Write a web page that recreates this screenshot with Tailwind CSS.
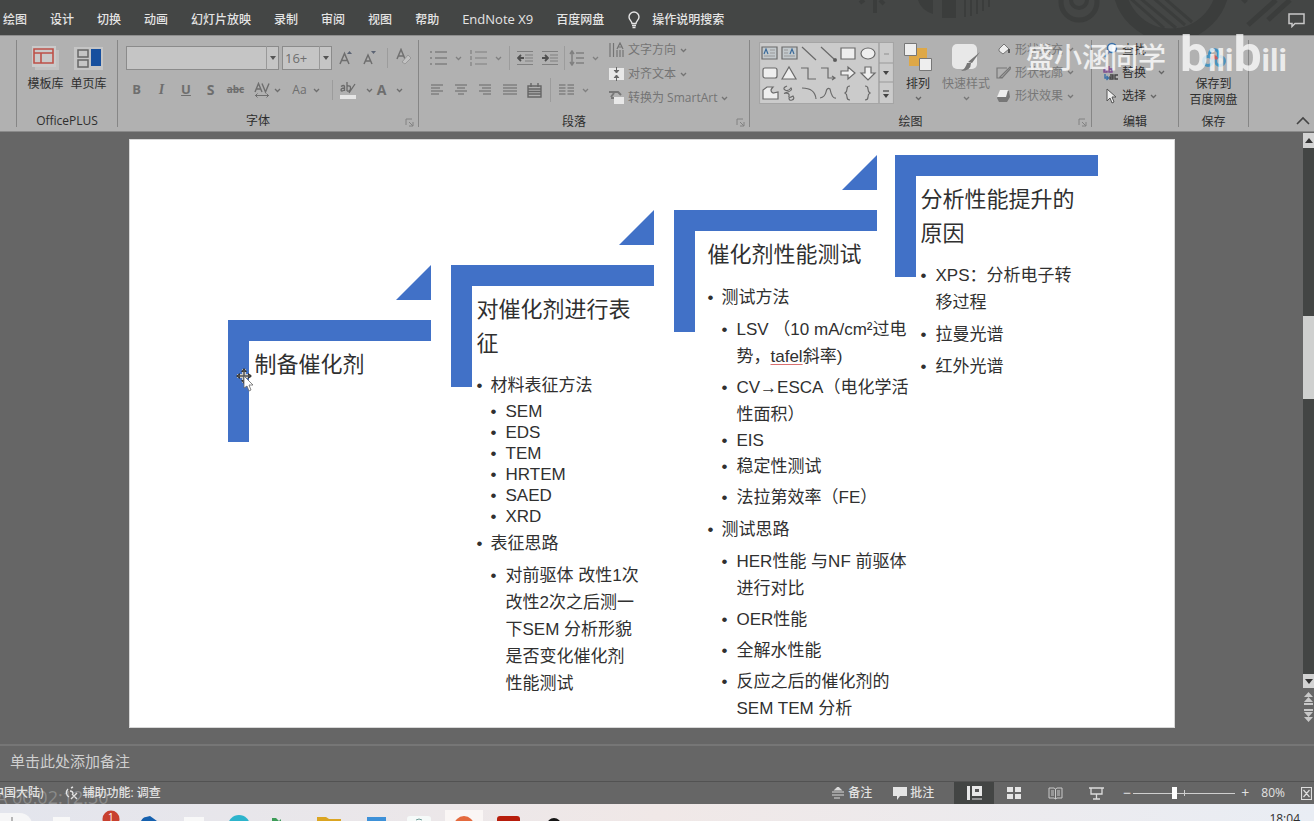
<!DOCTYPE html>
<html lang="zh-CN">
<head>
<meta charset="utf-8">
<title>演示文稿</title>
<script src="https://cdn.jsdelivr.net/npm/@tailwindcss/browser@4"></script>
</head>
<body class="flex h-screen flex-col overflow-hidden bg-[#666666] font-['Open_Sans','Noto_Sans_CJK_SC',sans-serif] text-xs text-[#2e2e2e]">
<svg class="hidden">
  <symbol id="caret" viewBox="0 0 7 5"><path d="M1 1l2.500 2.500L6 1" fill="none" stroke="currentColor" stroke-width="1.300"/></symbol>
  <symbol id="launch" viewBox="0 0 9 9"><path d="M1 7V1h6M4 4l4 4M8 4v4H4" fill="none" stroke="#828282"/></symbol>
</svg>

<!-- Tab bar -->
<header class="relative flex h-[35px] shrink-0 items-center bg-[#444645] pt-[5px]">
  <svg class="absolute top-0 right-0 h-[35px] w-[464px]" viewBox="0 0 464 35" fill="none" stroke="#3b3d3c">
    <path d="M10 3l4-3M25 0v13M34 4l-4-4" stroke-width="4"/>
    <path d="M68 0h15v14q-12-4-15-14zM92 0h14v18H92z" fill="#3b3d3c" stroke="none"/>
    <path d="M115 0v17M121 0v16M127 0v14M133 0v11M139 0v7" stroke-width="2"/>
    <circle cx="229" cy="2" r="18" stroke-width="5"/><circle cx="229" cy="0" r="8" stroke-width="4"/>
    <circle cx="321" cy="-17" r="52" stroke-width="13"/>
    <path d="M280-2l34 30M290-2l36 30M301-4l34 29M312-4l30 26" stroke-width="3"/>
    <path d="M398 25l28-25M418 20l22-20M393 2l3-3" stroke-width="5"/>
  </svg>
  <nav class="relative flex items-center gap-[23px] pl-[3px] font-medium whitespace-nowrap text-[#e4e4e4]">
    <button>绘图</button><button>设计</button><button>切换</button><button>动画</button><button>幻灯片放映</button><button>录制</button><button>审阅</button><button>视图</button><button>帮助</button><button class="text-[13px]">EndNote X9</button><button>百度网盘</button>
    <button class="flex items-center gap-[11px]"><svg class="h-[18px] w-[14px]" viewBox="0 0 14 18" fill="none" stroke="#e4e4e4" stroke-width="1.400"><path d="M5 12.500C5 10 2 9 2 6a5 5 0 0 1 10 0c0 3-3 4-3 6.500zM5 14.500h4M5.500 16.500h3"/></svg><span>操作说明搜索</span></button>
  </nav>
  <button class="relative mr-[9px] ml-auto" aria-label="批注"><svg class="h-[15px] w-[17px]" viewBox="0 0 17 15" fill="none" stroke="#c8c8c8" stroke-width="1.500"><path d="M1 1h15v9.500H7L4 13.500v-3H1z"/></svg></button>
</header>

<!-- Ribbon -->
<section class="relative flex h-[97px] shrink-0 border-y border-t-[#8e8e8e] border-b-[#8a8a8a] bg-[#b1b1b1] py-1 whitespace-nowrap">
  <div class="w-4 shrink-0"></div>
  <div class="flex w-[101px] shrink-0 flex-col border-l border-[#868686]">
    <div class="flex h-[68px] justify-center gap-[3px] pt-[6px]">
      <button class="flex w-10 flex-col items-center"><svg class="h-[26px] w-[30px]" viewBox="0 0 30 26"><path d="M4 4h24v20H4z" fill="#c2c2c2"/><path d="M1 0h24v21H1z" fill="#cacaca"/><path d="M3 3h19v14H3zM3 7h19M10 7v10" fill="none" stroke="#bd5048" stroke-width="1.600"/></svg><span class="pt-1">模板库</span></button>
      <button class="flex w-10 flex-col items-center"><svg class="h-[26px] w-[30px]" viewBox="0 0 30 26"><path d="M0 1h29v23H0z" fill="#c5c5c5"/><path d="M4 4h10v7H4zM4 14h10v7H4z" fill="none" stroke="#666" stroke-width="1.500"/><path d="M17 3h10v17H17z" fill="#164f9e"/></svg><span class="pt-1">单页库</span></button>
    </div>
    <div class="h-5 text-center leading-[28px]">OfficePLUS</div>
  </div>

  <div class="relative flex w-[301px] shrink-0 flex-col border-l border-[#868686] text-[#6e6e6e]">
    <div class="flex h-[68px] flex-col gap-1 pt-[6px]">
      <div class="flex items-center gap-[3px] pl-2">
        <div class="relative h-6 w-[153px]"><input aria-label="字体" class="block h-6 w-full border border-[#8b8b8b] bg-[#c5c5c5]"><span class="absolute top-0 right-0 flex h-6 w-[13px] items-center justify-center border-l border-[#999]"><svg class="h-1 w-[6px]" viewBox="0 0 6 4"><path d="M0 0h6L3 4z" fill="#555"/></svg></span></div>
        <div class="relative h-6 w-[50px]"><input aria-label="字号" value="16+" class="block h-6 w-full border border-[#8b8b8b] bg-[#c5c5c5] pl-0.5 text-[13px]"><span class="absolute top-0 right-0 flex h-6 w-[13px] items-center justify-center border-l border-[#999]"><svg class="h-1 w-[6px]" viewBox="0 0 6 4"><path d="M0 0h6L3 4z" fill="#555"/></svg></span></div>
        <button class="ml-1 w-[21px]" aria-label="增大字号"><svg class="h-4 w-[14px]" viewBox="0 0 14 16"><path d="M1 14L5.500 3.500 10 14M3 10.500h5" fill="none" stroke="#6e6e6e" stroke-width="1.500"/><path d="M8 4l2.500-3L13 4z" fill="#5c6474"/></svg></button>
        <button class="w-[21px]" aria-label="减小字号"><svg class="h-4 w-[14px]" viewBox="0 0 14 16"><path d="M1 14L5 5l4 9M2.500 11h5" fill="none" stroke="#6e6e6e" stroke-width="1.500"/><path d="M8 1l2.500 3L13 1z" fill="#5c6474"/></svg></button>
        <span class="h-5 w-px bg-[#9c9c9c]"></span>
        <button class="ml-1 w-5" aria-label="清除格式"><svg class="h-5 w-5" viewBox="0 0 20 20"><path d="M2 11L6 1.500 10 11M3.500 8h5" fill="none" stroke="#707070" stroke-width="1.500"/><path d="M7 14l6-7 3 3-6 6z" fill="#c2c2c2" stroke="#999"/></svg></button>
      </div>
      <div class="flex h-8 items-center pl-[6px]">
        <button class="w-[25px] text-[13px] font-bold">B</button><button class="w-[25px] font-['Liberation_Serif'] text-sm font-bold italic">I</button><button class="w-[24px] text-[13px] font-bold underline">U</button><button class="w-[25px] text-sm font-bold">S</button><button class="w-[25px] text-[10px] font-bold line-through">abc</button>
        <button class="flex w-[38px] items-center justify-center gap-1" aria-label="字符间距"><svg class="h-4 w-4" viewBox="0 0 16 16" fill="none" stroke="#6e6e6e" stroke-width="1.400"><path d="M1 10L4.500 1.500 8 10M2 7h5M8 1.500L11.500 10 15 1.500"/><path d="M1 13.500h14M3.500 11.500l-2 2 2 2M12.500 11.500l2 2-2 2" stroke-width="1"/></svg><svg class="h-[5px] w-[7px]"><use href="#caret"/></svg></button>
        <button class="flex w-[40px] items-center justify-center gap-[6px]"><span>Aa</span><svg class="h-[5px] w-[7px]"><use href="#caret"/></svg></button>
        <span class="mx-[6px] h-5 w-px bg-[#9c9c9c]"></span>
        <button class="flex w-[34px] items-center gap-[9px]" aria-label="突出显示"><svg class="h-5 w-[18px]" viewBox="0 0 18 20"><path d="M1 15h16v4H1z" fill="#e6e6e6"/><path d="M2 6.500q3-2 3.500 0V11M5.500 8Q2 8 2 10t3.500 0M8 2v9M8 6q4-1 3.500 2.500T8 11M16 4l-6 9" fill="none" stroke="#6a6a6a" stroke-width="1.300"/></svg><svg class="h-[5px] w-[7px]"><use href="#caret"/></svg></button>
        <button class="flex w-[34px] items-center justify-center gap-[10px] text-sm font-bold">A<svg class="h-[5px] w-[7px]"><use href="#caret"/></svg></button>
      </div>
    </div>
    <div class="h-5 pr-5 text-center leading-[28px] text-[#2e2e2e]">字体</div>
    <svg class="absolute right-1 bottom-0 h-[9px] w-[9px]"><use href="#launch"/></svg>
  </div>

  <div class="relative flex w-[331px] shrink-0 flex-col border-l border-[#868686] text-[#808080]">
    <div class="flex h-[68px]">
      <div class="flex w-[190px] flex-col gap-1 pt-[6px] pl-[11px]">
        <div class="flex h-6 items-center">
          <button class="flex w-10 items-center gap-2" aria-label="项目符号"><svg class="h-4 w-[17px]" viewBox="0 0 17 16" stroke="currentColor" stroke-width="1.300"><path d="M0 2h2M5 2h12M0 8h2M5 8h12M0 14h2M5 14h12"/></svg><svg class="h-[5px] w-[7px]"><use href="#caret"/></svg></button>
          <button class="flex w-[39px] items-center gap-2" aria-label="编号"><svg class="h-4 w-[17px]" viewBox="0 0 17 16" fill="none" stroke="currentColor" stroke-width="1.200"><path d="M1 0v4M1 6v4M1 12v4M5 2h12M5 8h12M5 14h12"/></svg><svg class="h-[5px] w-[7px]"><use href="#caret"/></svg></button>
          <span class="h-6 w-px bg-[#9c9c9c]"></span>
          <button class="flex w-[25px] justify-center pl-1" aria-label="减少缩进"><svg class="h-4 w-4" viewBox="0 0 16 16"><path d="M0 1.500h16M8 5h8M8 8h8M8 11h8M0 14.500h16" stroke="currentColor" stroke-width="1.200"/><path d="M7 8H2M4 5L1 8l3 3" fill="none" stroke="#505050" stroke-width="1.800"/></svg></button>
          <button class="flex w-[25px] justify-center pl-1" aria-label="增加缩进"><svg class="h-4 w-4" viewBox="0 0 16 16"><path d="M0 1.500h16M8 5h8M8 8h8M8 11h8M0 14.500h16" stroke="currentColor" stroke-width="1.200"/><path d="M0 8h5M3 5l3 3-3 3" fill="none" stroke="#505050" stroke-width="1.800"/></svg></button>
          <span class="mx-[4px] h-6 w-px bg-[#9c9c9c]"></span>
          <button class="flex items-center gap-2" aria-label="行距"><svg class="h-4 w-[15px]" viewBox="0 0 15 16" fill="none" stroke="currentColor" stroke-width="1.500"><path d="M3 2v12M1 4l2-3 2 3M1 12l2 3 2-3M7 3h8M7 8h8M7 13h8"/></svg><svg class="h-[5px] w-[7px]"><use href="#caret"/></svg></button>
        </div>
        <div class="flex h-8 items-center gap-[10px]">
          <button aria-label="左对齐"><svg class="h-3 w-[14px]" viewBox="0 0 14 12" stroke="currentColor" stroke-width="1.300"><path d="M1 1h12M1 4h9M1 7h12M1 10h8"/></svg></button>
          <button aria-label="居中"><svg class="h-3 w-[14px]" viewBox="0 0 14 12" stroke="currentColor" stroke-width="1.300"><path d="M1 1h12M3 4h8M1 7h12M4 10h6"/></svg></button>
          <button aria-label="右对齐"><svg class="h-3 w-[14px]" viewBox="0 0 14 12" stroke="currentColor" stroke-width="1.300"><path d="M1 1h12M4 4h9M1 7h12M5 10h8"/></svg></button>
          <button aria-label="两端对齐"><svg class="h-3 w-[15px]" viewBox="0 0 15 12" stroke="currentColor" stroke-width="1.300"><path d="M1 1h14M1 4h14M1 7h14M1 10h14"/></svg></button>
          <button aria-label="分散对齐"><svg class="h-[15px] w-[15px]" viewBox="0 0 15 15" fill="none" stroke="#666" stroke-width="1.400"><path d="M1 3h13v11H1zM1 6h13M1 8.500h13M1 11h13M4 0v4M11 0v4"/></svg></button>
          <span class="-mx-[2px] h-6 w-px bg-[#9c9c9c]"></span>
          <button class="flex items-center gap-2" aria-label="分栏"><svg class="h-3 w-[15px]" viewBox="0 0 15 12" stroke="currentColor" stroke-width="1.300"><path d="M0 1h6.500M8.500 1H15M0 4h6.500M8.500 4H15M0 7h6.500M8.500 7H15M0 10h6.500M8.500 10H15"/></svg><svg class="h-[5px] w-[7px]"><use href="#caret"/></svg></button>
        </div>
      </div>
      <div class="-mt-[2px] flex flex-col leading-6 text-[#747474]">
        <button class="flex h-6 items-center gap-1"><svg class="h-4 w-[15px]" viewBox="0 0 15 16" fill="none" stroke="currentColor" stroke-width="1.200"><path d="M1 1v14M4.500 1v14M8 8v7M14 8v7M8 7l3-6 3 6M9 5h4M11 8v7"/></svg><span>文字方向</span><svg class="h-[5px] w-[7px]"><use href="#caret"/></svg></button>
        <button class="flex h-6 items-center gap-1"><svg class="h-4 w-[15px]" viewBox="0 0 15 16"><path d="M0 2h15v12H0z" fill="#e8e8e8"/><path d="M7.500 1v5M7.500 10v5M5 4l2.500 3L10 4M5 12l2.500-3 2.500 3" stroke="#666" fill="#666"/></svg><span>对齐文本</span><svg class="h-[5px] w-[7px]"><use href="#caret"/></svg></button>
        <button class="flex h-6 items-center gap-1"><svg class="h-4 w-[15px]" viewBox="0 0 15 16"><path d="M0 2h9l3 3M2 7l3-4M2 8h3" stroke="#777" stroke-width="2" fill="none"/><path d="M5 7h10v7H5z" fill="#e8e8e8"/></svg><span>转换为 SmartArt</span><svg class="h-[5px] w-[7px]"><use href="#caret"/></svg></button>
      </div>
    </div>
    <div class="h-5 pr-5 text-center leading-[28px] text-[#2e2e2e]">段落</div>
    <svg class="absolute right-1 bottom-0 h-[9px] w-[9px]"><use href="#launch"/></svg>
  </div>

  <div class="relative flex w-[342px] shrink-0 flex-col border-l border-[#868686] text-[#777777]">
    <div class="flex h-[68px]">
      <svg class="mt-[2px] ml-[9px] h-[62px] w-[135px]" viewBox="0 0 135 62" fill="none" stroke="#6a6a6a" stroke-width="1.200">
        <path d="M.5.500h134v61H.5z" fill="#cbcbcb" stroke="#a5a5a5"/><path d="M120 1v60M120 21h14M120 40h14" stroke="#999"/>
        <path d="M3 5h15v12H3zM23 5h15v12H23z" fill="#c3c9cc"/><path d="M5 12l2-5 2 5M31 12l2-5 2 5" stroke="#3a6a9a"/><path d="M11 8h5M11 11h5M5 14h11M25 8h4M25 11h4M25 14h11" stroke="#999"/>
        <path d="M43 5l14 13M62 5l13 12"/><circle cx="76" cy="18" r="1.500" fill="#555"/>
        <path d="M82 6h14v11H82z" fill="#eee"/><ellipse cx="109" cy="11.500" rx="7" ry="5.500" fill="#eee"/>
        <rect x="4" y="26" width="14" height="10" rx="2" fill="#eee"/><path d="M23 37l7-12 7 12z" fill="#eee"/><path d="M42 26h7v11h8M62 26h7v10h6M73 34l3 2-3 2"/>
        <path d="M82 29h7v-4l7 6-7 6v-4h-7zM106 25h6v6h4l-7 7-7-7h4z" fill="#eee"/>
        <path d="M4 57V48l4-3h6q-4 4 0 6l5-1v7z" fill="#eee"/><path d="M28 44q-5 2-2 4t6-2q2 2-3 4t-3 1q5 0 4 3t4 0q2 3-1 4t-3-2M43 46q13 0 14 11M61 56q5-1 6-6t4-3q2 10 6 9M91 44q-3 0-3 3t-2 4q2 1 2 4t3 3M106 44q3 0 3 3t2 4q-2 1-2 4t-3 3"/>
        <path d="M125 12h5" stroke="#999"/><path d="M124 29h6l-3 4zM124 52h6l-3 4z" fill="#444" stroke="none"/><path d="M124 49h6" stroke="#444"/>
      </svg>
      <button class="flex w-12 flex-col items-center pt-[3px] text-[#2e2e2e]"><svg class="h-[29px] w-[28px]" viewBox="0 0 28 29"><path d="M12 5h11v10H12zM5 13h10v10H5z" fill="#dea847"/><path d="M.5.500h12v12H.5zM15.500 15.500h12v12h-12z" fill="#eee" stroke="#777"/></svg><span class="pt-1">排列</span><svg class="mt-1 h-[5px] w-[7px] text-[#666]"><use href="#caret"/></svg></button>
      <button class="flex w-12 flex-col items-center pt-[3px]"><svg class="h-[29px] w-[28px]" viewBox="0 0 28 29"><rect y="1" width="25" height="25" rx="5" fill="#e8e8e8"/><path d="M28 9l-8 11-4-1zM19 20q0 8-10 8 5-3 6-8z" fill="#777"/></svg><span class="pt-1">快速样式</span><svg class="mt-1 h-[5px] w-[7px]"><use href="#caret"/></svg></button>
      <div class="-mt-[2px] ml-[6px] flex flex-col">
        <button class="flex h-6 items-center gap-1"><svg class="h-4 w-[15px]" viewBox="0 0 15 16"><path d="M3 7l5-5 5 5-6 5-4-3z" fill="#eee" stroke="#777"/><path d="M13 7v4" stroke="#555" stroke-width="2"/></svg><span>形状填充</span><svg class="h-[5px] w-[7px]"><use href="#caret"/></svg></button>
        <button class="flex h-6 items-center gap-1"><svg class="h-4 w-[15px]" viewBox="0 0 15 16" fill="none" stroke="#777" stroke-width="1.200"><path d="M11 3H1v10h4M4 12L14 2l1 1L6 13z"/></svg><span>形状轮廓</span><svg class="h-[5px] w-[7px]"><use href="#caret"/></svg></button>
        <button class="flex h-6 items-center gap-1"><svg class="h-4 w-[15px]" viewBox="0 0 15 16"><path d="M4 3h9l1 6-3 5H3l-2-4z" fill="#777"/><path d="M4 2h8l-2 7H1z" fill="#eee"/></svg><span>形状效果</span><svg class="h-[5px] w-[7px]"><use href="#caret"/></svg></button>
      </div>
    </div>
    <div class="h-5 pr-5 text-center leading-[28px] text-[#2e2e2e]">绘图</div>
    <svg class="absolute right-1 bottom-0 h-[9px] w-[9px]"><use href="#launch"/></svg>
  </div>

  <div class="flex w-[87px] shrink-0 flex-col border-l border-[#868686]">
    <div class="-mt-[2px] flex h-[70px] flex-col pl-[11px]">
      <button class="flex h-6 items-center gap-1"><svg class="h-4 w-[15px]" viewBox="0 0 15 16"><circle cx="9" cy="6" r="4.500" fill="#eef4fa" stroke="#3a70a8" stroke-width="1.500"/><path d="M6 10l-4 5" stroke="#3a70a8" stroke-width="2"/></svg><span>查找</span></button>
      <button class="flex h-6 items-center gap-1"><svg class="h-4 w-[15px]" viewBox="0 0 15 16" fill="none" stroke-width="1.400"><path d="M1 3h3v4H1V5h3M6 1v6h3V4H6" stroke="#7d4b8c"/><path d="M7 10h3v4H7v-2h3M15 10h-3v4h3" stroke="#444"/><path d="M2 9v4h3M3.500 11l2 2-2 2" stroke="#3a70a8"/></svg><span>替换</span><svg class="ml-2 h-[5px] w-[7px] text-[#666]"><use href="#caret"/></svg></button>
      <button class="flex h-6 items-center gap-1"><svg class="h-4 w-[15px]" viewBox="0 0 15 16"><path d="M4 1v12l3-3 2 5 2-1-2-5h4z" fill="#eee" stroke="#555"/></svg><span>选择</span><svg class="h-[5px] w-[7px] text-[#666]"><use href="#caret"/></svg></button>
    </div>
    <div class="h-5 text-center leading-[28px]">编辑</div>
  </div>
  <div class="flex w-[71px] shrink-0 flex-col border-x border-[#868686]">
    <button class="flex h-[68px] flex-col items-center pt-2 leading-4"><svg class="mb-2 h-[20px] w-[24px] shrink-0" viewBox="0 0 24 20" fill="none" stroke-width="3"><circle cx="12" cy="6" r="4.500" stroke="#3c8fc0"/><circle cx="6" cy="13" r="4.500" stroke="#4a93bb"/><circle cx="18" cy="13" r="4.500" stroke="#4a93bb"/><path d="M9 11l3-3 3 3" stroke="#c65a62"/></svg><span>保存到</span><span>百度网盘</span></button>
    <div class="h-5 text-center leading-[28px]">保存</div>
  </div>
  <button class="mr-1 ml-auto self-end pb-0.5" aria-label="折叠功能区"><svg class="h-[9px] w-[14px]" viewBox="0 0 14 9" fill="none" stroke="#444" stroke-width="1.600"><path d="M1 8l6-6 6 6"/></svg></button>

  <!-- Author watermark laid over the ribbon -->
  <div class="pointer-events-none absolute -top-3 right-[27px] flex items-center gap-[14px] text-white/80">
    <span class="text-[28px] leading-[60px] font-medium">盛小涵同学</span>
    <span class="flex items-baseline font-[Roboto] leading-[60px] font-bold text-white/75" aria-label="bilibili"><span class="text-[50px]">b</span><span class="text-[32px]">ili</span><span class="text-[50px]">b</span><span class="text-[32px]">ili</span></span>
  </div>
</section>

<!-- Editing area -->
<main class="flex min-h-0 flex-1">
  <div class="flex min-w-0 flex-1 justify-center pt-[7px] pb-4">
    <article class="relative grid w-[1046px] grid-cols-[223px_223px_221px_203px] border border-[#d8d8d8] bg-white pl-[98px] font-['Liberation_Sans','Noto_Sans_CJK_SC',sans-serif] text-[17px] leading-[27px] whitespace-nowrap text-[#303030]">
      <section class="relative mt-[180px] pt-7 pl-[27px]">
        <div class="absolute top-0 left-0 h-[122px] w-[203px] border-t-[21px] border-l-[21px] border-[#4171c7]"></div>
        <svg class="absolute -top-[55px] left-[168px] h-[35px] w-[35px]" viewBox="0 0 35 35"><path d="M35 0v35H0z" fill="#4171c7"/></svg>
        <h2 class="relative text-[22px] leading-[34px]">制备催化剂</h2>
      </section>
      <section class="relative mt-[125px] pt-7 pl-[26px]">
        <div class="absolute top-0 left-0 h-[122px] w-[203px] border-t-[21px] border-l-[21px] border-[#4171c7]"></div>
        <svg class="absolute -top-[55px] left-[168px] h-[35px] w-[35px]" viewBox="0 0 35 35"><path d="M35 0v35H0z" fill="#4171c7"/></svg>
        <h2 class="relative text-[22px] leading-[34px]">对催化剂进行表<br>征</h2>
        <ul class="relative mt-[11px] flex flex-col gap-[5px]">
          <li class="grid grid-cols-[14px_1fr] before:content-['•']"><div>材料表征方法
            <ul class="mt-[5px] flex flex-col gap-[5px] leading-4">
              <li class="grid grid-cols-[15px_1fr] before:content-['•']">SEM</li>
              <li class="grid grid-cols-[15px_1fr] before:content-['•']">EDS</li>
              <li class="grid grid-cols-[15px_1fr] before:content-['•']">TEM</li>
              <li class="grid grid-cols-[15px_1fr] before:content-['•']">HRTEM</li>
              <li class="grid grid-cols-[15px_1fr] before:content-['•']">SAED</li>
              <li class="grid grid-cols-[15px_1fr] before:content-['•']">XRD</li>
            </ul></div></li>
          <li class="grid grid-cols-[14px_1fr] before:content-['•']"><div>表征思路
            <ul class="mt-[5px]">
              <li class="grid grid-cols-[15px_1fr] before:content-['•']"><div>对前驱体 改性1次<br>改性2次之后测一<br>下SEM 分析形貌<br>是否变化催化剂<br>性能测试</div></li>
            </ul></div></li>
        </ul>
      </section>
      <section class="relative mt-[70px] pt-7 pl-[34px]">
        <div class="absolute top-0 left-0 h-[122px] w-[203px] border-t-[21px] border-l-[21px] border-[#4171c7]"></div>
        <svg class="absolute -top-[55px] left-[168px] h-[35px] w-[35px]" viewBox="0 0 35 35"><path d="M35 0v35H0z" fill="#4171c7"/></svg>
        <h2 class="relative text-[22px] leading-[34px]">催化剂性能测试</h2>
        <ul class="relative mt-3 flex flex-col gap-[5px]">
          <li class="grid grid-cols-[14px_1fr] before:content-['•']"><div>测试方法
            <ul class="mt-[5px] flex flex-col gap-1">
              <li class="grid grid-cols-[15px_1fr] before:content-['•']"><div>LSV （10 mA/cm²过电<br>势，<span class="underline decoration-[#d97070] decoration-1 underline-offset-2">tafel</span>斜率)</div></li>
              <li class="grid grid-cols-[15px_1fr] before:content-['•']"><div>CV→ESCA（电化学活<br>性面积）</div></li>
              <li class="grid grid-cols-[15px_1fr] leading-[17px] before:content-['•']">EIS</li>
              <li class="grid grid-cols-[15px_1fr] before:content-['•']">稳定性测试</li>
              <li class="grid grid-cols-[15px_1fr] before:content-['•']">法拉第效率（FE）</li>
            </ul></div></li>
          <li class="grid grid-cols-[14px_1fr] before:content-['•']"><div>测试思路
            <ul class="mt-[5px] flex flex-col gap-1">
              <li class="grid grid-cols-[15px_1fr] before:content-['•']"><div>HER性能 与NF 前驱体<br>进行对比</div></li>
              <li class="grid grid-cols-[15px_1fr] before:content-['•']">OER性能</li>
              <li class="grid grid-cols-[15px_1fr] before:content-['•']">全解水性能</li>
              <li class="grid grid-cols-[15px_1fr] before:content-['•']"><div>反应之后的催化剂的<br>SEM TEM 分析</div></li>
            </ul></div></li>
        </ul>
      </section>
      <section class="relative mt-[15px] pt-7 pl-[26px]">
        <div class="absolute top-0 left-0 h-[122px] w-[203px] border-t-[21px] border-l-[21px] border-[#4171c7]"></div>
        <h2 class="relative text-[22px] leading-[34px]">分析性能提升的<br>原因</h2>
        <ul class="relative mt-[11px] flex flex-col gap-[5px]">
          <li class="grid grid-cols-[15px_1fr] before:content-['•']"><div>XPS：分析电子转<br>移过程</div></li>
          <li class="grid grid-cols-[15px_1fr] before:content-['•']">拉曼光谱</li>
          <li class="grid grid-cols-[15px_1fr] before:content-['•']">红外光谱</li>
        </ul>
      </section>
      <!-- Move pointer -->
      <svg class="absolute top-[228px] left-[106px] h-[24px] w-[18px]" viewBox="0 0 18 24"><path d="M8 1v14M1 8h14" stroke="#ccc" stroke-width="4"/><path d="M8 0l3 4H5zM8 16l3-4H5zM0 8l4-3v6zM16 8l-4-3v6z" fill="#333"/><path d="M8 2v12M2 8h12" stroke="#555" stroke-width="1.500"/><path d="M8 8v12l3-2 2 5 2-1-2-5h4z" fill="#fff" stroke="#666" stroke-width=".8"/></svg>
    </article>
  </div>
  <div class="flex w-[11px] shrink-0 flex-col pt-px pb-[22px]">
    <button class="flex h-[15px] items-center justify-center bg-[#d2d2d2]" aria-label="向上滚动"><svg class="h-[5px] w-2" viewBox="0 0 8 5"><path d="M4 0l4 5H0z" fill="#333"/></svg></button>
    <div class="flex flex-1 flex-col bg-[#434544]"><div class="h-[32%]"></div><div class="h-[83px] bg-[#cfd0cf]"></div></div>
    <button class="flex h-[14px] items-center justify-center bg-[#d2d2d2]" aria-label="向下滚动"><svg class="h-[5px] w-2" viewBox="0 0 8 5"><path d="M4 5l4-5H0z" fill="#333"/></svg></button>
    <button class="mt-1 flex justify-center" aria-label="上一张幻灯片"><svg class="h-[13px] w-[9px]" viewBox="0 0 9 13"><path d="M4.500 0L9 5H0zM4.500 5L9 10H0zM0 11h9v2H0z" fill="#c8c8c8"/></svg></button>
    <button class="mt-1 flex justify-center" aria-label="下一张幻灯片"><svg class="h-[13px] w-[9px]" viewBox="0 0 9 13"><path d="M4.500 13L9 8H0zM4.500 8L9 3H0zM0 0h9v2H0z" fill="#c8c8c8"/></svg></button>
  </div>
</main>

<div class="h-[37px] shrink-0 border-t-2 border-[#767676] pl-[10px]">
  <input aria-label="备注" placeholder="单击此处添加备注" class="block h-[30px] w-full bg-transparent text-[15px] outline-none placeholder:text-[#cfcfcf]">
</div>

<footer class="relative flex h-[23px] shrink-0 items-center border-t border-[#525252] font-medium whitespace-nowrap text-[#e2e2e2]">
  <span class="pointer-events-none absolute top-[5px] -left-1 text-lg leading-5 font-normal text-white/25">A 00:02:12:30</span>
  <span class="-ml-2">中国大陆)</span>
  <button class="ml-5 flex items-center gap-1"><svg class="h-4 w-[15px]" viewBox="0 0 15 16" fill="none" stroke="#e2e2e2" stroke-width="1.400"><path d="M5 12a5 5 0 0 1-1-8M7 3l2-1M6 6q3 0 3 3M8 9l5 5M13 8l-6 6"/></svg><span>辅助功能: 调查</span></button>
  <button class="ml-auto flex items-center gap-1"><svg class="h-3 w-3" viewBox="0 0 12 12" stroke="#d8d8d8" stroke-width="1.200"><path d="M6 0l3 3H3z" fill="#ddd"/><path d="M0 5h12M0 8h12M2 11h6"/></svg>备注</button>
  <button class="ml-5 flex items-center gap-0.5"><svg class="h-[13px] w-4" viewBox="0 0 16 13"><path d="M1 0h14v9H8l-3 4V9H1z" fill="#e4e4e4"/></svg>批注</button>
  <button class="ml-5 flex h-full w-10 items-center justify-center bg-[#434544]" aria-label="普通视图"><svg class="h-[14px] w-[15px]" viewBox="0 0 15 14"><path d="M0 0h3v14H0zM5 0h10v10H5z" fill="#e8e8e8"/><path d="M8 3h4v3H8z" fill="#555"/><path d="M5 13h10" stroke="#e8e8e8"/></svg></button>
  <button class="ml-[13px]" aria-label="幻灯片浏览"><svg class="h-[13px] w-[15px]" viewBox="0 0 15 13"><path d="M0 0h6v5H0zM8 0h6v5H8zM0 7h6v5H0zM8 7h6v5H8z" fill="#e4e4e4"/></svg></button>
  <button class="ml-[26px]" aria-label="阅读视图"><svg class="h-[13px] w-[15px]" viewBox="0 0 15 13" fill="none" stroke="#c8c8c8"><path d="M1 1h5l1.500 1L9 1h5v10H9l-1.500 1L6 11H1zM7.500 2v10M3 4h3M3 6h3M3 8h3M9 4h3M9 6h3M9 8h3"/></svg></button>
  <button class="ml-[26px]" aria-label="幻灯片放映"><svg class="h-[13px] w-[15px]" viewBox="0 0 15 13" fill="none" stroke="#dcdcdc" stroke-width="1.300"><path d="M0 1h15M2 1v6h11V1M7.500 7v5M4 12h7"/></svg></button>
  <button class="ml-[17px] w-3 text-sm leading-4 font-normal" aria-label="缩小">−</button>
  <label class="relative flex h-4 w-[102px] items-center"><span class="sr-only">缩放</span><input type="range" min="0" max="100" value="40" class="h-px w-full appearance-none bg-[#cfcfcf] [&::-webkit-slider-thumb]:h-3 [&::-webkit-slider-thumb]:w-[5px] [&::-webkit-slider-thumb]:appearance-none [&::-webkit-slider-thumb]:bg-white"><span class="absolute top-[5px] left-1/2 h-[6px] w-px bg-[#cfcfcf]"></span></label>
  <button class="ml-1 w-3 text-sm leading-4 font-normal" aria-label="放大">+</button>
  <button class="ml-[10px]">80%</button>
  <button class="mr-0.5 ml-4" aria-label="适应窗口"><svg class="h-[13px] w-[11px]" viewBox="0 0 11 13" fill="none" stroke="#ddd" stroke-width="1.200"><path d="M.5.500h10v12H.5zM2.500 3l6 7M8.500 3l-6 7"/></svg></button>
</footer>

<!-- System task bar, cut off by the screen edge -->
<div class="flex h-[17px] shrink-0 justify-between overflow-hidden bg-linear-to-r from-[#e3e5ed] via-[#f0e8e7] to-[#e9edf4]">
  <svg class="h-[17px] w-[580px]" viewBox="0 0 580 17">
    <rect x="-16" y="9" width="48" height="30" rx="12" fill="#f6f6f7"/><path d="M12 13v4" stroke="#777"/>
    <path d="M53 13h17v4H53zM184 13h20v4h-20z" fill="#f8f8f8"/>
    <circle cx="111" cy="15" r="8.500" fill="#c8402f"/><text x="108" y="17" font-size="10" fill="#fff">1</text>
    <path d="M141 17q2-4 5-4l4-1 7 5z" fill="#1560ae"/>
    <circle cx="239" cy="22" r="11" fill="#2db4cc"/><path d="M272 17v-3h4l3 3 2-2v2z" fill="#3d9c58"/>
    <path d="M317 17v-4h9l3 2h12v2z" fill="#dba522"/><path d="M367 13h19v4h-19z" fill="#3e91d8"/>
    <rect x="407" y="12" width="24" height="10" rx="3" fill="#f6faf9"/><path d="M416 16q3-2 6 0" stroke="#6b9c96" fill="none"/>
    <path d="M445 6h38v11h-38z" fill="#faf6f5"/><circle cx="464" cy="22" r="10" fill="#e46a3e"/>
    <rect x="497" y="12" width="23" height="12" rx="3" fill="#b71d0c"/><circle cx="554" cy="21" r="7" fill="#151515"/>
  </svg>
  <time class="mr-[14px] pt-[7px] leading-4">18:04</time>
</div>
</body>
</html>
